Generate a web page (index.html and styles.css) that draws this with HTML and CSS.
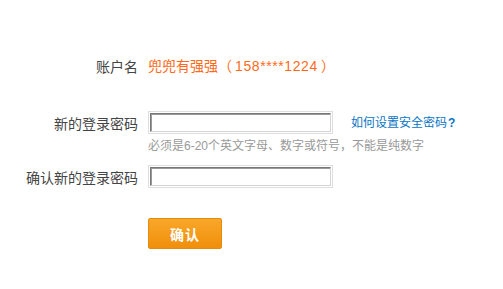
FILE: index.html
```html
<!DOCTYPE html>
<html lang="zh-CN">
<head>
<meta charset="utf-8">
<title>修改登录密码</title>
<link rel="stylesheet" href="styles.css">
</head>
<body>
<form class="form">
  <div class="row row-account">
    <span class="label">账户名</span>
    <span class="account">兜兜有强强（<span class="num">158****1224</span>）</span>
  </div>
  <div class="row row-pwd">
    <label class="label" for="pwd">新的登录密码</label>
    <div class="field-line">
      <span class="field"><input id="pwd" type="password"></span>
      <a class="help" href="#">如何设置安全密码<b class="q">?</b></a>
    </div>
  </div>
  <div class="row row-hint">
    <span></span>
    <span class="hint">必须是6-20个英文字母、数字或符号，不能是纯数字</span>
  </div>
  <div class="row row-confirm">
    <label class="label" for="pwd2">确认新的登录密码</label>
    <div class="field-line">
      <span class="field"><input id="pwd2" type="password"></span>
    </div>
  </div>
  <div class="row row-submit">
    <span></span>
    <div><button type="button" class="btn">确认</button></div>
  </div>
</form>
</body>
</html>
```
FILE: styles.css
```css
html, body {
  margin: 0;
  padding: 0;
  background: #fff;
}
body {
  font-family: "Noto Sans CJK SC", "Liberation Sans", sans-serif;
  color: #444;
}
.form {
  padding-top: 55px;
}
.row {
  display: grid;
  grid-template-columns: 138px 1fr;
  column-gap: 10px;
  align-items: center;
}
.label {
  text-align: right;
  font-size: 14px;
  line-height: 20px;
  color: #444;
}
.row-account {
  height: 20px;
}
.account {
  font-family: "Noto Sans CJK SC", sans-serif;
  font-size: 14px;
  line-height: 20px;
  color: #ff6a1a;
}
.account .num {
  font-family: "Liberation Sans", sans-serif;
  letter-spacing: 0.6px;
  margin: 0 3px;
}
.row-pwd {
  margin-top: 36px;
}
.field-line {
  display: flex;
  align-items: center;
}
.field {
  display: block;
  border: 1px solid #dedede;
  padding: 1px;
}
.field input {
  display: block;
  box-sizing: border-box;
  width: 181px;
  height: 19px;
  margin: 0;
  padding: 0 3px;
  border: 1px solid;
  border-color: #777 #d4d4d4 #d4d4d4 #777;
  box-shadow: inset 1px 1px 0 #9a9a9a;
  background: #fff;
  outline: none;
}
.help {
  margin-left: 18px;
  font-size: 12px;
  line-height: 18px;
  color: #0a74c4;
  text-decoration: none;
}
.help .q {
  font-family: "Liberation Sans", sans-serif;
  font-weight: bold;
  margin-left: 1px;
}
.row-hint {
  margin-top: 3px;
}
.hint {
  font-family: "Liberation Sans", "Noto Sans CJK SC", sans-serif;
  font-size: 12px;
  line-height: 18px;
  color: #999;
}
.row-confirm {
  margin-top: 10px;
}
.row-submit {
  margin-top: 30px;
}
.btn {
  display: block;
  width: 74px;
  height: 31px;
  margin: 0;
  padding: 0;
  border: 1px solid #e58a0c;
  border-radius: 2px;
  background: linear-gradient(#f9a72a, #f08f0b);
  color: #fff;
  font-family: "Noto Sans CJK SC", sans-serif;
  font-size: 14px;
  font-weight: bold;
  letter-spacing: 1px;
  cursor: pointer;
}
```
